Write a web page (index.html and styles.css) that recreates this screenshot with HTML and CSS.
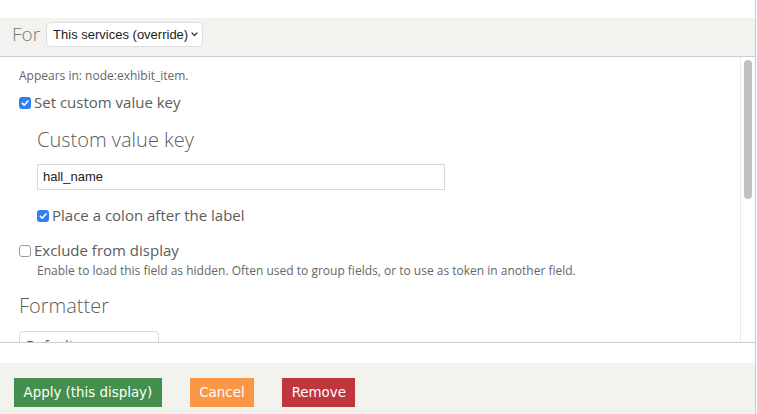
FILE: index.html
```html
<!DOCTYPE html>
<html lang="en">
<head>
<meta charset="utf-8">
<title>Field settings</title>
<link rel="stylesheet" href="styles.css">
</head>
<body>
<div class="dialog">
  <div class="top-gap"></div>
  <div class="override-bar">
    <span class="for-label">For</span>
    <div class="select select-override">
      <span>This services (override)</span>
      <svg class="chev" width="7" height="5" viewBox="0 0 7 5"><path d="M1 1l2.5 2.5L6 1" fill="none" stroke="#333" stroke-width="1.2" stroke-linecap="round" stroke-linejoin="round"/></svg>
    </div>
  </div>
  <div class="scroll-area">
    <div class="scroll-content">
      <p class="appears">Appears in: node:exhibit_item.</p>
      <div class="check-row">
        <span class="cb cb-on"><svg width="11" height="11" viewBox="0 0 11 11"><path d="M3 5.7l1.8 1.8L8.2 3.6" fill="none" stroke="#fff" stroke-width="1.5" stroke-linecap="round" stroke-linejoin="round"/></svg></span>
        <span>Set custom value key</span>
      </div>
      <h2 class="heading indent">Custom value key</h2>
      <div class="text-input indent">hall_name</div>
      <div class="check-row indent row-colon">
        <span class="cb cb-on"><svg width="11" height="11" viewBox="0 0 11 11"><path d="M3 5.7l1.8 1.8L8.2 3.6" fill="none" stroke="#fff" stroke-width="1.5" stroke-linecap="round" stroke-linejoin="round"/></svg></span>
        <span>Place a colon after the label</span>
      </div>
      <div class="check-row row-exclude">
        <span class="cb cb-off"></span>
        <span>Exclude from display</span>
      </div>
      <p class="desc indent">Enable to load this field as hidden. Often used to group fields, or to use as token in another field.</p>
      <h2 class="heading heading-formatter">Formatter</h2>
      <div class="select select-default">
        <span>Default</span>
        <svg class="chev" width="7" height="5" viewBox="0 0 7 5"><path d="M1 1l2.5 2.5L6 1" fill="none" stroke="#999" stroke-width="1.2" stroke-linecap="round" stroke-linejoin="round"/></svg>
      </div>
    </div>
    <div class="scroll-track"><div class="scroll-thumb"></div></div>
  </div>
  <div class="white-gap"></div>
  <div class="footer">
    <button class="btn btn-apply">Apply (this display)</button>
    <button class="btn btn-cancel">Cancel</button>
    <button class="btn btn-remove">Remove</button>
  </div>
</div>
</body>
</html>
```
FILE: styles.css
```css
* { box-sizing: border-box; }
html, body { margin: 0; padding: 0; background: #fff; }
body { font-family: "Open Sans", "DejaVu Sans", sans-serif; overflow: hidden; }

.dialog {
  width: 756px;
  height: 414px;
  border-right: 1px solid #c9c9c9;
  display: flex;
  flex-direction: column;
}

.top-gap { height: 18px; flex: none; }

.override-bar {
  flex: none;
  height: 39px;
  background: #f2f2ee;
  border-bottom: 1px solid #cdcdcd;
  display: flex;
  align-items: flex-start;
  padding: 4px 0 0 12px;
  gap: 6px;
}

.for-label {
  font-family: "Open Sans", sans-serif;
  font-weight: 300;
  font-size: 19px;
  line-height: 25px;
  color: #777;
}

.select {
  display: flex;
  align-items: center;
  justify-content: space-between;
  background: #fff;
  border: 1px solid #dcdcdc;
  border-radius: 5px;
}

.select-override {
  width: 157px;
  height: 25px;
  padding: 0 4px 0 6px;
  font-family: "Liberation Sans", Arial, sans-serif;
  font-size: 13px;
  color: #222;
}

.scroll-area {
  flex: none;
  height: 286px;
  border-bottom: 1px solid #cdcdcd;
  display: flex;
  overflow: hidden;
}

.scroll-content {
  flex: 1;
  padding: 11px 0 0 19px;
  overflow: hidden;
  color: #5c5c5c;
}

.scroll-track {
  flex: none;
  width: 15px;
  border-left: 1px solid #ebebeb;
  padding: 3px 0 0 3px;
}

.scroll-thumb {
  width: 8px;
  height: 139px;
  border-radius: 4px;
  background: #c1c1c1;
}

.appears, .desc {
  margin: 0;
  font-size: 12px;
  line-height: 16px;
  color: #666;
}

.check-row {
  display: flex;
  align-items: center;
  gap: 3px;
  font-size: 15px;
  line-height: 20px;
  color: #5c5c5c;
  margin-top: 8px;
}

.cb {
  flex: none;
  width: 12px;
  height: 12px;
  border-radius: 3px;
  display: block;
  margin-top: 1px;
}
.cb svg { display: block; width: 12px; height: 12px; }
.cb-on { background: #2f80f5; }
.cb-off { border: 1px solid #9a9a9a; background: #fff; }

.indent { margin-left: 18px; }

.heading {
  margin: 14px 0 0 18px;
  font-weight: 300;
  font-size: 20px;
  line-height: 28px;
  color: #5c5c5c;
}

.text-input {
  margin-top: 10px;
  width: 408px;
  height: 26px;
  border: 1px solid #d9d9d9;
  padding: 0 5px;
  font-family: "Liberation Sans", Arial, sans-serif;
  font-size: 13px;
  line-height: 24px;
  color: #222;
}

.row-colon { margin-top: 15px; }
.row-exclude { margin-top: 15px; }

.desc { margin-top: 3px; }

.heading-formatter { margin: 13px 0 0 0; }

.select-default {
  margin-top: 11px;
  width: 140px;
  height: 28px;
  border-radius: 4px;
  padding: 0 6px 0 6px;
  align-items: flex-start;
  font-size: 14px;
  line-height: 18px;
  color: #555;
}
.select-default span { padding-top: 5px; }
.select-default .chev { margin-top: 10px; }

.white-gap { flex: none; height: 20px; }

.footer {
  flex: 1;
  background: #f2f2ee;
  display: flex;
  align-items: flex-start;
  gap: 28px;
  padding: 15px 0 0 14px;
}

.btn {
  height: 29px;
  padding: 0 9.5px;
  border: none;
  border-radius: 0;
  font-family: "DejaVu Sans", Verdana, sans-serif;
  font-size: 13.4px;
  color: #fff;
}
.btn-apply { background: #438f4b; }
.btn-cancel { background: #fb9645; }
.btn-remove { background: #bf363c; }
```
